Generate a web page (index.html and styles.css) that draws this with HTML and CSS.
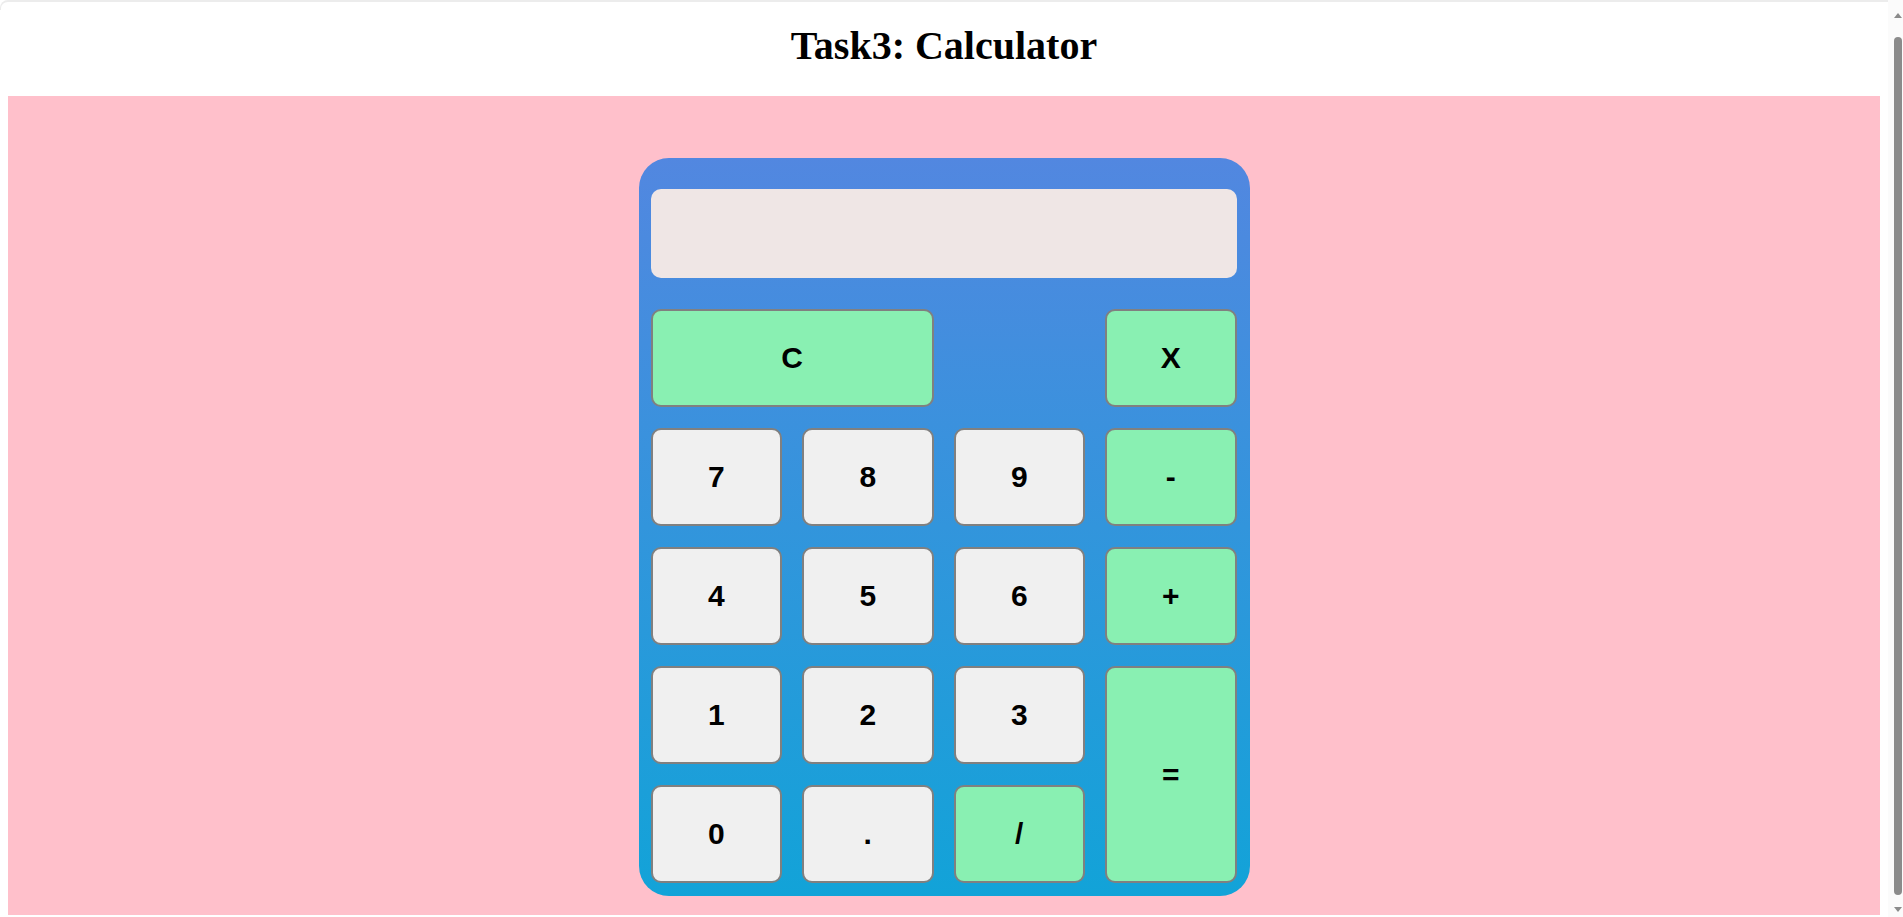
FILE: index.html
```html
<!DOCTYPE html>
<html lang="en">
<head>
<meta charset="utf-8">
<title>Task3: Calculator</title>
<link rel="stylesheet" href="styles.css">
</head>
<body>
<header class="header">
  <h1 class="title">Task3: Calculator</h1>
</header>
<main class="stage">
  <div class="calculator">
    <div class="display"></div>
    <div class="keys">
      <button class="key op wide">C</button>
      <button class="key op col4">X</button>
      <button class="key">7</button>
      <button class="key">8</button>
      <button class="key">9</button>
      <button class="key op">-</button>
      <button class="key">4</button>
      <button class="key">5</button>
      <button class="key">6</button>
      <button class="key op">+</button>
      <button class="key">1</button>
      <button class="key">2</button>
      <button class="key">3</button>
      <button class="key op tall">=</button>
      <button class="key">0</button>
      <button class="key">.</button>
      <button class="key op">/</button>
    </div>
  </div>
</main>
<div class="window-edge"></div>
<div class="scrollbar">
  <span class="arrow-up"></span>
  <span class="thumb"></span>
  <span class="arrow-down"></span>
</div>
</body>
</html>
```
FILE: styles.css
```css
html, body {
  background: #ffffff;
}
body {
  margin: 0 23px 8px 8px;
  font-family: "Liberation Serif", "Times New Roman", serif;
}
.header {
  padding: 23px 0 27px;
}
.title {
  margin: 0;
  font-size: 40px;
  line-height: 46px;
  font-weight: bold;
  text-align: center;
  color: #000;
}
.stage {
  background: #ffc0cb;
  display: flex;
  justify-content: center;
  padding: 62px 0 19px;
}
.calculator {
  width: 586px;
  padding: 31px 13px 13px 12px;
  border-radius: 30px;
  background: linear-gradient(to bottom, #5287e0, #12a3d8);
}
.display {
  height: 89px;
  border-radius: 10px;
  background: #efe6e5;
  margin-bottom: 31px;
}
.keys {
  display: grid;
  grid-template-columns: repeat(4, 1fr);
  grid-template-rows: repeat(5, 98px);
  gap: 21px 20px;
}
.key {
  box-sizing: border-box;
  margin: 0;
  border: 2px solid #808080;
  border-radius: 10px;
  background: #f0f0f0;
  color: #000;
  font-family: "Liberation Sans", Arial, sans-serif;
  font-weight: bold;
  font-size: 30px;
  padding: 0;
}
.op {
  background: #89f0b2;
}
.wide {
  grid-column: 1 / span 2;
}
.col4 {
  grid-column: 4;
}
.tall {
  grid-column: 4;
  grid-row: 4 / span 2;
}
.window-edge {
  position: fixed;
  top: 0;
  left: 0;
  right: 0;
  height: 10px;
  box-sizing: border-box;
  border-top: 2px solid #ececec;
  border-left: 1px solid #ececec;
  border-top-left-radius: 8px;
  pointer-events: none;
}
.scrollbar {
  position: fixed;
  top: 0;
  right: 0;
  bottom: 0;
  width: 15px;
  box-sizing: border-box;
  padding: 13px 0 5px 4px;
  background: #fbfbfb;
  display: flex;
  flex-direction: column;
  align-items: center;
}
.arrow-up {
  width: 0;
  height: 0;
  border-left: 4px solid transparent;
  border-right: 4px solid transparent;
  border-bottom: 5px solid #8b8b8b;
  margin-bottom: 19px;
}
.thumb {
  flex: 1;
  width: 8px;
  border-radius: 4px;
  background: #8b8b8b;
}
.arrow-down {
  width: 0;
  height: 0;
  border-left: 4px solid transparent;
  border-right: 4px solid transparent;
  border-top: 5px solid #8b8b8b;
  margin-top: 12px;
}
```
